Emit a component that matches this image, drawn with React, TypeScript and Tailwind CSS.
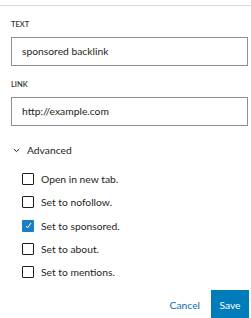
import React from "react";

const Check = ({ checked, label }: { checked?: boolean; label: string }) => (
  <div className="flex items-center h-[16px]">
    <span
      className={
        "w-[12px] h-[12px] ml-[22px] flex items-center justify-center rounded-[1px] " +
        (checked ? "bg-[#1a7fc4]" : "border border-[#1e1e1e] bg-white")
      }
    >
      {checked && (
        <svg width="9" height="9" viewBox="0 0 9 9">
          <path d="M2 5 L3.6 6.8 L7 2" fill="none" stroke="white" strokeWidth="1" />
        </svg>
      )}
    </span>
    <span className="ml-[7px] text-[10.3px] text-[#1e1e1e] leading-[16px]">{label}</span>
  </div>
);

export default function App() {
  return (
    <div
      className="w-[251px] h-[318px] bg-white overflow-hidden"
      style={{ fontFamily: 'Lato, "Open Sans", sans-serif' }}
    >
      <div className="mt-[5px] border-t border-[#dcdcde]" />
      <div className="pl-[11px] pr-[3px]">
        <div className="mt-[13px] h-[11px] leading-[11px] text-[7.5px] font-semibold uppercase text-[#333]">
          Text
        </div>
        <div className="mt-[7px] h-[29px] border border-[#8c8f94] flex items-center pl-[10px] text-[10.3px] text-[#1e1e1e]">
          sponsored backlink
        </div>
        <div className="mt-[13px] h-[11px] leading-[11px] text-[7.5px] font-semibold uppercase text-[#333]">
          Link
        </div>
        <div className="mt-[7px] h-[29px] border border-[#8c8f94] flex items-center pl-[10px] text-[10.3px] text-[#1e1e1e]">
          http://example.com
        </div>
      </div>
      <div className="mt-[16px] flex items-center h-[16px] pl-[13px]">
        <svg width="7" height="5" viewBox="0 0 7 5">
          <path d="M0.8 1 L3.5 3.6 L6.2 1" fill="none" stroke="#1e1e1e" strokeWidth="1" />
        </svg>
        <span className="ml-[7px] text-[10.3px] text-[#1e1e1e] leading-[16px]">Advanced</span>
      </div>
      <div className="mt-[13px] flex flex-col gap-[7.25px]">
        <Check label="Open in new tab." />
        <Check label="Set to nofollow." />
        <Check checked label="Set to sponsored." />
        <Check label="Set to about." />
        <Check label="Set to mentions." />
      </div>
      <div className="mt-[10px] flex justify-end items-center pr-[2px]">
        <span className="text-[10.3px] text-[#0a6fb4] mr-[11px]">Cancel</span>
        <div className="w-[38px] h-[32px] bg-[#007cba] text-white text-[10.3px] flex items-center justify-center">
          Save
        </div>
      </div>
    </div>
  );
}
